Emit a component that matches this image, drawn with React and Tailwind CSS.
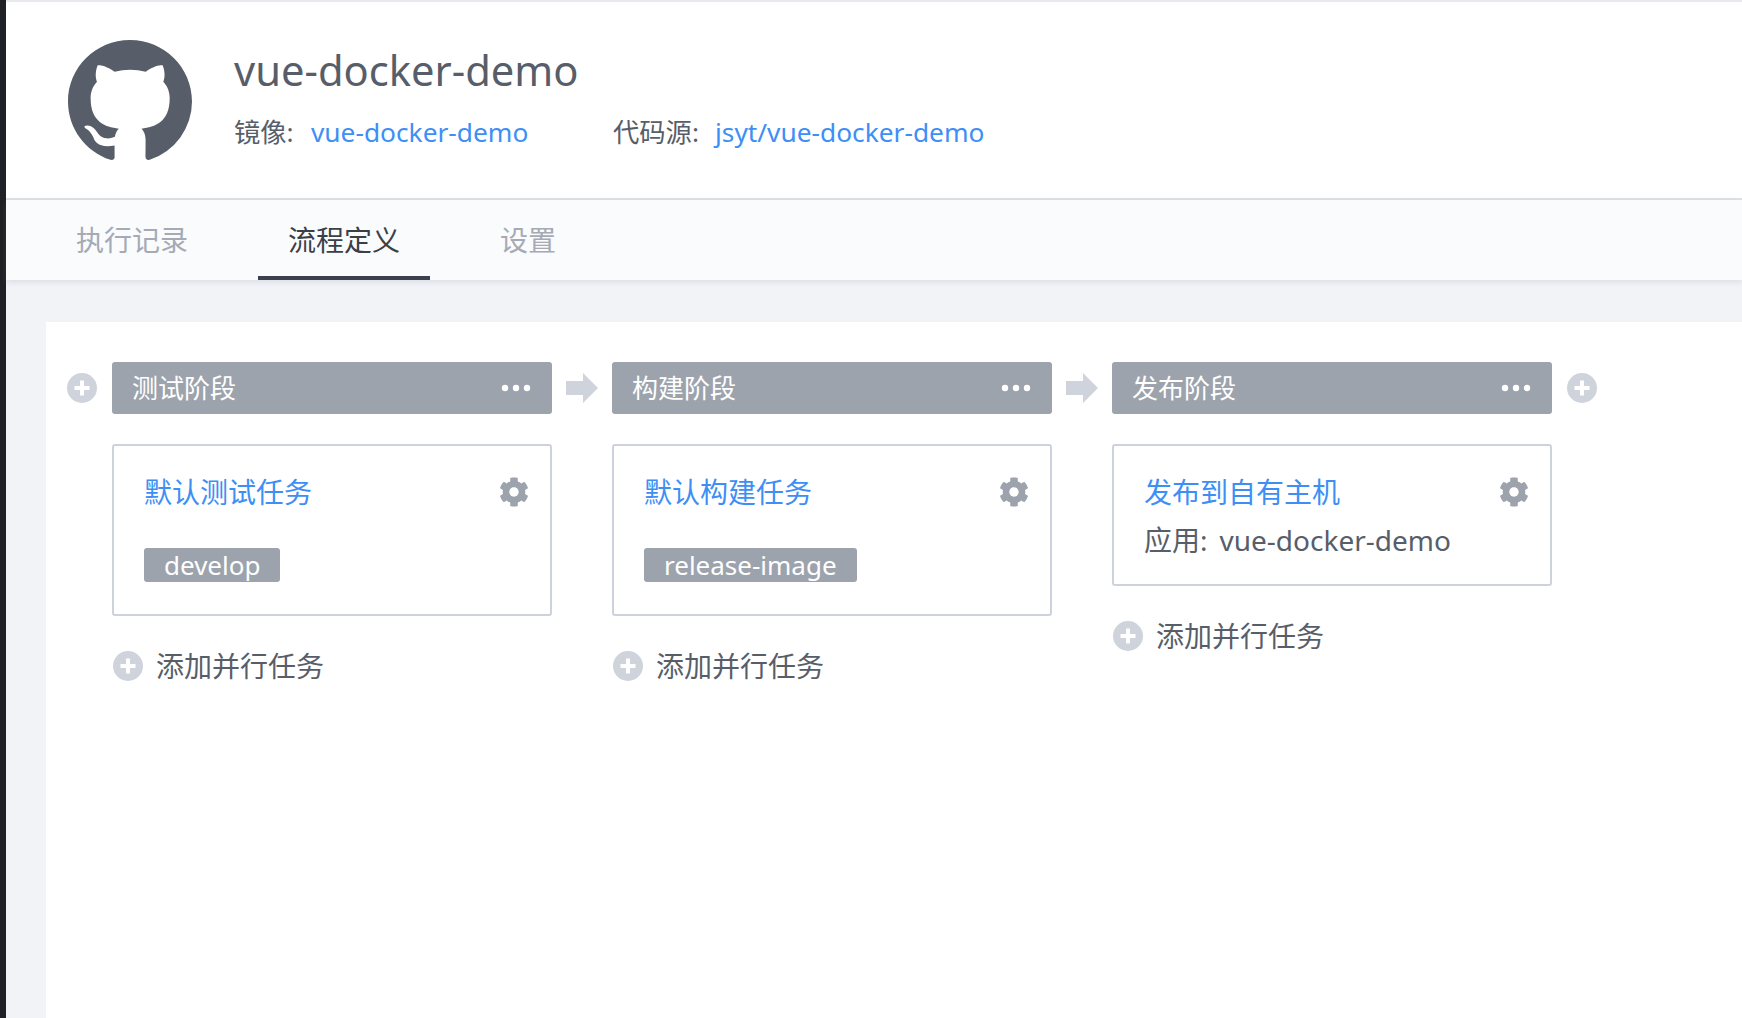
import React from "react";
import { FaCog } from "react-icons/fa";

const FONT = '"Noto Sans", "Noto Sans CJK SC", sans-serif';

function PlusCircle() {
  return (
    <svg viewBox="0 0 30 30" className="w-[30px] h-[30px] shrink-0">
      <circle cx="15" cy="15" r="15" fill="#ced3dc" />
      <path d="M13 7.5h4v5.5h5.5v4H17v5.5h-4V17H7.5v-4H13z" fill="#fff" />
    </svg>
  );
}

function Arrow() {
  return (
    <svg viewBox="0 0 32 30" className="w-[32px] h-[30px] mt-[-1px]">
      <path d="M0 8h17V0l15 15-15 15v-8H0z" fill="#ced3dc" />
    </svg>
  );
}

function Dots() {
  return (
    <svg viewBox="0 0 30 8" className="w-[30px] h-[8px]">
      <circle cx="4" cy="4" r="3.2" fill="#fff" />
      <circle cx="15" cy="4" r="3.2" fill="#fff" />
      <circle cx="26" cy="4" r="3.2" fill="#fff" />
    </svg>
  );
}

function Stage({ title, task, tag, app }) {
  return (
    <div className="w-[440px] shrink-0">
      <div className="h-[52px] bg-[#9ca3ad] rounded-[3px] pl-[20px] pr-[21px] flex items-center justify-between text-white text-[26px]">
        <span>{title}</span>
        <Dots />
      </div>
      <div className="mt-[30px] border-2 border-[#cdd2dd] rounded-[3px] pl-[30px] pr-[21px] pt-[19px]">
        <div className="flex items-center justify-between h-[54px]">
          <span className="text-[28px] text-[#3d8ff5] leading-[54px]">{task}</span>
          <FaCog className="w-[30px] h-[30px] text-[#9ca3ad]" />
        </div>
        {tag && (
          <div className="mt-[29px] mb-[32px] h-[34px] flex">
            <span className="h-[34px] px-[20px] bg-[#9ca3ad] rounded-[3px] text-white text-[26px] leading-[34px]">{tag}</span>
          </div>
        )}
        {app && (
          <div className="h-[40px] mt-[1px] mb-[24px] flex text-[28px] leading-[40px] text-[#575e69]">
            <span className="mr-[12px]">应用:</span>
            <span>{app}</span>
          </div>
        )}
      </div>
      <div className="mt-[35px] flex items-center gap-[13px] pl-[1px] text-[28px] text-[#575e69] h-[30px]">
        <PlusCircle />
        <span>添加并行任务</span>
      </div>
    </div>
  );
}

function Tab({ children, active }) {
  return (
    <div className={`h-[80px] px-[30px] pt-[4px] flex items-center text-[28px] border-b-4 ${active ? "text-[#3a3f48] border-[#3a414c]" : "text-[#a5aab5] border-transparent"}`}>
      {children}
    </div>
  );
}

export default function App() {
  return (
    <div className="w-[1742px] h-[1018px] overflow-hidden flex bg-[#f2f3f7]" style={{ fontFamily: FONT }}>
      <div className="w-[6px] shrink-0 bg-[#1e2026]" />
      <div className="flex-1 min-w-0 flex flex-col">
        <div className="h-[2px] bg-[#e6e9ed]" />
        <div className="h-[198px] bg-white border-b-2 border-[#dfe1e6] flex items-center pl-[62px] pb-[2px]">
          <svg viewBox="0 0 16 16" className="w-[124px] h-[123px] shrink-0 mt-[4px]" preserveAspectRatio="none">
            <path fill="#575e69" d="M8 0C3.58 0 0 3.58 0 8c0 3.54 2.29 6.53 5.47 7.59.4.07.55-.17.55-.38 0-.19-.01-.82-.01-1.49-2.01.37-2.53-.49-2.69-.94-.09-.23-.48-.94-.82-1.13-.28-.15-.68-.52-.01-.53.63-.01 1.08.58 1.23.82.72 1.21 1.87.87 2.33.66.07-.52.28-.87.51-1.07-1.78-.2-3.64-.89-3.64-3.95 0-.87.31-1.59.82-2.15-.08-.2-.36-1.02.08-2.12 0 0 .67-.21 2.2.82.64-.18 1.32-.27 2-.27.68 0 1.36.09 2 .27 1.53-1.04 2.2-.82 2.2-.82.44 1.1.16 1.92.08 2.12.51.56.82 1.27.82 2.15 0 3.07-1.87 3.75-3.65 3.95.29.25.54.73.54 1.48 0 1.07-.01 1.93-.01 2.2 0 .21.15.46.55.38A8.013 8.013 0 0016 8c0-4.42-3.58-8-8-8z" />
          </svg>
          <div className="ml-[42px] flex flex-col mt-[-6px]">
            <div className="text-[41.7px] leading-[56px] text-[#575e69]">vue-docker-demo</div>
            <div className="mt-[16px] flex text-[26.3px] leading-[36px] text-[#575e69]">
              <span className="w-[77px]">镜像:</span>
              <span className="text-[#3d8ff5] w-[302px]">vue-docker-demo</span>
              <span className="w-[102px]">代码源:</span>
              <span className="text-[#3d8ff5]">jsyt/vue-docker-demo</span>
            </div>
          </div>
        </div>
        <div className="h-[80px] bg-[#fafbfc] shadow-[0_2px_6px_rgba(120,130,150,0.2)] flex gap-[40px] pl-[40px] relative">
          <Tab>执行记录</Tab>
          <Tab active>流程定义</Tab>
          <Tab>设置</Tab>
        </div>
        <div className="flex-1 pl-[40px] pt-[42px]">
          <div className="h-full bg-white pl-[21px] pt-[40px] flex items-start">
            <div className="w-[45px] h-[52px] shrink-0 flex items-center">
              <PlusCircle />
            </div>
            <Stage title="测试阶段" task="默认测试任务" tag="develop" />
            <div className="w-[60px] h-[52px] shrink-0 flex items-center justify-center"><Arrow /></div>
            <Stage title="构建阶段" task="默认构建任务" tag="release-image" />
            <div className="w-[60px] h-[52px] shrink-0 flex items-center justify-center"><Arrow /></div>
            <Stage title="发布阶段" task="发布到自有主机" app="vue-docker-demo" />
            <div className="w-[45px] h-[52px] shrink-0 flex items-center justify-end">
              <PlusCircle />
            </div>
          </div>
        </div>
      </div>
    </div>
  );
}
